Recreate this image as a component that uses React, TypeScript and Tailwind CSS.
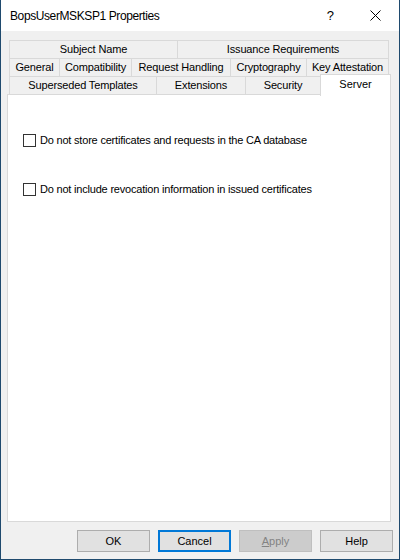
import React from 'react'

const row1 = [
  { label: 'Subject Name', w: 'w-[169px]' },
  { label: 'Issuance Requirements', w: 'w-[212px]' },
]

const row2 = [
  { label: 'General', w: 'w-[51px]' },
  { label: 'Compatibility', w: 'w-[73px]' },
  { label: 'Request Handling', w: 'w-[100px]' },
  { label: 'Cryptography', w: 'w-[77px]' },
  { label: 'Key Attestation', w: 'w-[83px]' },
]

const row3 = [
  { label: 'Superseded Templates', w: 'w-[148px]' },
  { label: 'Extensions', w: 'w-[90px]' },
  { label: 'Security', w: 'w-[76px]' },
]

function Tab({ label, w, first }: { label: string; w: string; first?: boolean }) {
  return (
    <div
      className={`${w} h-[19px] shrink-0 border border-[#d9d9d9] bg-[#f0f0f0] flex items-center justify-center text-[11px] tracking-[-0.15px] leading-none text-black ${first ? '' : '-ml-px'}`}
    >
      {label}
    </div>
  )
}

function Checkbox({ label }: { label: string }) {
  return (
    <div className="flex items-center gap-[4px]">
      <div className="w-[13px] h-[13px] border border-[#333333] bg-white shrink-0" />
      <span className="text-[11px] tracking-[-0.2px] leading-none text-black">{label}</span>
    </div>
  )
}

function Button({ children, variant }: { children: React.ReactNode; variant?: 'default' | 'disabled' }) {
  const base = 'w-[73px] h-[22px] flex items-center justify-center text-[11px] leading-none'
  if (variant === 'default') {
    return <div className={`${base} border-2 border-[#0078d7] bg-[#e1e1e1] text-black`}>{children}</div>
  }
  if (variant === 'disabled') {
    return <div className={`${base} border border-[#bfbfbf] bg-[#cccccc] text-[#838383]`}>{children}</div>
  }
  return <div className={`${base} border border-[#adadad] bg-[#e1e1e1] text-black`}>{children}</div>
}

export default function App() {
  return (
    <div
      className="w-[400px] h-[560px] flex flex-col border-x border-b border-[#1f4a6e] bg-[#f0f0f0]"
      style={{ fontFamily: '"Liberation Sans", Arial, sans-serif' }}
    >
      {/* Title bar */}
      <div className="h-[31px] bg-white flex items-center shrink-0">
        <span className="pl-[9px] text-[12px] tracking-[-0.4px] text-black flex-1">BopsUserMSKSP1 Properties</span>
        <span className="text-[13px] text-black mr-[36px]">?</span>
        <svg width="11" height="11" viewBox="0 0 11 11" className="mr-[18px]">
          <path d="M0.5 0.5 L10.5 10.5 M10.5 0.5 L0.5 10.5" stroke="#000" strokeWidth="1" />
        </svg>
      </div>

      {/* Body */}
      <div className="flex-1 flex flex-col px-[6px] pt-[9px]">
        <div className="pl-[2px] flex flex-col">
          <div className="flex">
            {row1.map((t, i) => (
              <Tab key={t.label} {...t} first={i === 0} />
            ))}
          </div>
          <div className="flex -mt-px">
            {row2.map((t, i) => (
              <Tab key={t.label} {...t} first={i === 0} />
            ))}
          </div>
          <div className="flex items-start -mt-px h-[19px]">
            {row3.map((t, i) => (
              <Tab key={t.label} {...t} first={i === 0} />
            ))}
            <div className="relative z-10 w-[71px] h-[22px] -mt-[2px] -ml-px shrink-0 border-x border-t border-[#d9d9d9] bg-white flex justify-center pt-[4px] text-[11px] leading-none text-black">
              Server
            </div>
          </div>
        </div>

        {/* Panel */}
        <div className="-mt-px w-[384px] h-[428px] border border-[#d9d9d9] bg-white flex flex-col gap-[36px] pl-[15px] pt-[39px]">
          <Checkbox label="Do not store certificates and requests in the CA database" />
          <Checkbox label="Do not include revocation information in issued certificates" />
        </div>

        {/* Buttons */}
        <div className="flex justify-end gap-[8px] pt-[8px] w-[386px]">
          <Button>OK</Button>
          <Button variant="default">Cancel</Button>
          <Button variant="disabled">
            <span className="underline">A</span>pply
          </Button>
          <Button>Help</Button>
        </div>
      </div>
    </div>
  )
}
